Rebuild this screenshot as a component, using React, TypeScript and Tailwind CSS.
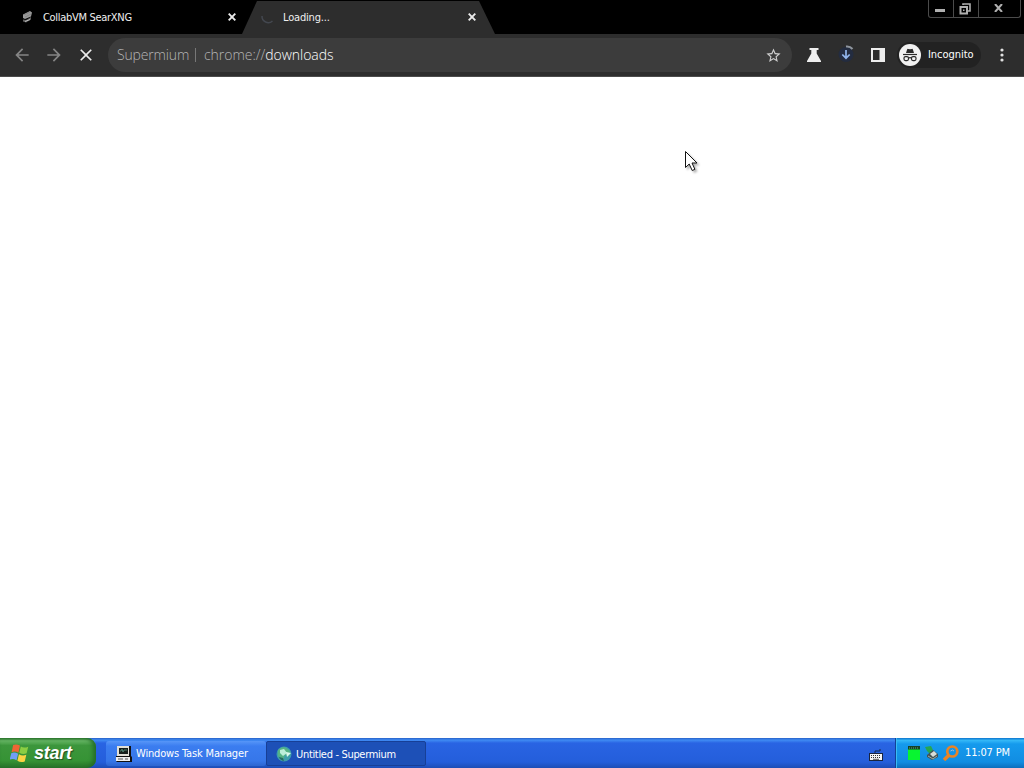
import React from 'react';
import { MdArrowBack, MdArrowForward, MdClose, MdStarBorder } from 'react-icons/md';

const uiFont = "font-['DejaVu_Sans_Condensed','DejaVu_Sans',sans-serif] [font-stretch:condensed]";

const TabClose = () => (
  <svg width="8" height="8" viewBox="0 0 8 8" className="shrink-0" stroke="#ececec" strokeWidth="1.9">
    <path d="M.7.7l6.6 6.6M7.3.7L.7 7.3" />
  </svg>
);

const SearxIcon = () => (
  <svg width="16" height="16" viewBox="0 0 16 16">
    <path d="M3 5.500L10 2l2 1.500-1 4-6 2.500-2-1z" fill="#999" />
    <path d="M4 6l6-3M5 8l6-3" stroke="#858585" />
    <path d="M3 10.500l3 .5 5-3v2.500l-5 3-3-1z" fill="#606060" />
    <path d="M5 12.500l5-2" stroke="#bbb" />
  </svg>
);

const Incognito = () => (
  <svg width="22" height="22" viewBox="0 0 22 22" className="shrink-0">
    <circle cx="11" cy="11" r="11" fill="#f1f1f1" />
    <path d="M7 9L8.100 5.500q.3-.8 1.100-.6l1.800.4 1.800-.4q.8-.2 1.100.6L15 9z" fill="#292929" />
    <path d="M4 10.500h14" stroke="#292929" strokeWidth="1.200" />
    <g fill="none" stroke="#292929" strokeWidth="1.200">
      <rect x="5" y="12.600" width="4.500" height="4" rx="1.500" />
      <rect x="12.500" y="12.600" width="4.500" height="4" rx="1.500" />
      <path d="M9.500 14q1.500-.8 3 0" />
    </g>
  </svg>
);

const DownloadIcon = () => (
  <svg width="18" height="20" viewBox="0 0 18 20" fill="none">
    <circle cx="9" cy="10.500" r="7.500" fill="#232c40" />
    <path d="M9 6v8M5.300 10.500L9 14.200l3.700-3.700" stroke="#91b5ec" strokeWidth="1.700" />
    <path d="M9 2.500q4-.5 6.500 2.500" stroke="#8f969f" strokeWidth="2" />
  </svg>
);

const WindowControls = () => (
  <div className="flex h-[18px] w-[93px] self-start rounded-b-[3px] border border-t-0 border-[#4b4b4b]">
    <div className="flex w-[25px] justify-center border-r border-[#4b4b4b]">
      <div className="mt-[9px] mr-[2px] h-[3px] w-[10px] bg-[#b0b0b0]" />
    </div>
    <div className="flex w-[25px] justify-center border-r border-[#4b4b4b]">
      <svg width="12" height="12" viewBox="0 0 12 12" className="mt-[3px] mr-[3px]" fill="none" stroke="#b0b0b0">
        <path d="M4 2V1h7v7H9" strokeWidth="1.600" />
        <rect x="1.500" y="4" width="6.500" height="6.500" strokeWidth="2" />
        <path d="M4 7.300h1.500" strokeWidth="1.500" />
      </svg>
    </div>
    <div className="flex flex-1 justify-center">
      <svg width="9" height="8" viewBox="0 0 9 8" className="mt-[4px] mr-[2px]" stroke="#b0b0b0" strokeWidth="2">
        <path d="M1 0l7 8M8 0L1 8" />
      </svg>
    </div>
  </div>
);

const TabStrip = () => (
  <div className="flex h-[34px] bg-black text-[11px] leading-[34px] text-[#efefef]">
    <div className="flex w-[242px] items-center pl-[20px]">
      <SearxIcon />
      <span className="ml-[7px] w-[185px] pt-px whitespace-nowrap tracking-[-0.3px]">CollabVM SearXNG</span>
      <TabClose />
    </div>
    <div className="flex w-[253px] items-center bg-[#2d2d2d] pl-[18px] [clip-path:polygon(15px_1px,237px_1px,253px_100%,0_100%)]">
      <svg width="16" height="16" viewBox="0 0 16 16" fill="none" stroke="#43474f" strokeWidth="1.500">
        <path d="M2 7a6.300 6.300 0 0 0 10.500 5" />
      </svg>
      <span className="ml-[7px] w-[185px] pt-px tracking-[-0.18px]">Loading...</span>
      <TabClose />
    </div>
    <div className="ml-auto flex pr-[3px]">
      <WindowControls />
    </div>
  </div>
);

const Toolbar = () => (
  <div className="flex h-[43px] items-center border-b border-[#4b4b4b] bg-[#2d2d2d]">
    <MdArrowBack size={20} className="ml-[12px] text-[#858585]" />
    <MdArrowForward size={20} className="ml-[12px] text-[#858585]" />
    <MdClose size={20} className="ml-[12px] text-[#ededed]" />
    <div className="ml-[12px] flex h-[34px] w-[684px] items-center rounded-full bg-[#3c3c3c] pl-[9px] font-['Open_Sans',sans-serif] text-[14px] font-light [font-stretch:normal] whitespace-nowrap text-[#b5b5b5]">
      <span className="mb-[2px] w-[71px] tracking-[-0.15px]">Supermium</span>
      <span className="mx-[7px] h-[14px] w-px bg-[#777]" />
      <span className="mb-[2px] ml-px tracking-[-0.03px]">chrome://<span className="text-white">downloads</span></span>
      <MdStarBorder size={17} className="mr-[10px] ml-auto text-[#cecece]" />
    </div>
    <svg width="16" height="16" viewBox="0 0 16 16" className="ml-[14px]" fill="#eee">
      <path d="M3.500 1h9v2h-1.800v3.500L15 14v1H1v-1l4.300-7.500V3H3.500z" />
    </svg>
    <div className="mb-[2px] ml-[15px] flex w-[18px]">
      <DownloadIcon />
    </div>
    <svg width="16" height="16" viewBox="0 0 16 16" className="ml-[15px]">
      <path fill="#ededed" fillRule="evenodd" d="M1 1h14v14H1zM3 3v10h6.500V3z" />
    </svg>
    <div className="ml-[11px] flex h-[26px] w-[84px] items-center rounded-full bg-[#222] pl-[2px]">
      <Incognito />
      <span className="ml-[7px] pt-px text-[11px] tracking-[-0.05px] text-white">Incognito</span>
    </div>
    <svg width="4" height="14" viewBox="0 0 4 14" className="ml-[19px]" fill="#e1e1e1">
      <circle cx="2" cy="2" r="1.600" />
      <circle cx="2" cy="7" r="1.600" />
      <circle cx="2" cy="12" r="1.600" />
    </svg>
  </div>
);

const WindowsFlag = () => (
  <svg width="20" height="19" viewBox="0 0 19 18" className="shrink-0">
    <path d="M3 1q3-1.500 6.500.5L8 8.300q-3-2-6.500-.5z" fill="#ef6534" />
    <path d="M10.300 2.300q3 2 7 .2l-1.500 6.300q-3.500 1.500-7-.5z" fill="#8bcd43" />
    <path d="M1.200 8.800q3-1.500 6.500.5l-1.500 6q-3.500-2-6.500-.5z" fill="#709ef5" />
    <path d="M8.500 9.800q3.500 2 7 .4L14 16.500q-3.500 1.500-7-.5z" fill="#fbd343" />
  </svg>
);

const ComputerIcon = () => (
  <svg width="16" height="16" viewBox="0 0 16 16" className="shrink-0">
    <path d="M1 0h14v10l1 1v5H1l-1-1v-5h1z" fill="#111" />
    <path d="M1 0h12v10H1z" fill="#e2e0d8" />
    <path d="M3 2h9v6H3z" fill="#171f1c" />
    <path d="M4 5h1l1-2 1 3 1-2h3" fill="none" stroke="#5b9481" strokeWidth=".8" />
    <path d="M0 11h14v4H0z" fill="#eee" />
    <path d="M2 13h5M9 13h3" stroke="#555" />
  </svg>
);

const GlobeIcon = () => (
  <svg width="16" height="16" viewBox="0 0 16 16" className="shrink-0">
    <circle cx="8" cy="8" r="7.500" fill="#3e9eab" />
    <path d="M2 4q4-4 8-2l4 3-1 5-4-1-2 5-5-4z" fill="#56b385" />
    <path d="M4 4l4-1 3 4-4 3-3-3z" fill="#bcefd9" />
    <path d="M10 6l5 1-4 4z" fill="#dcf8ed" />
    <path d="M3 11l4 1 1 3q-4-1-5-4z" fill="#286c62" />
  </svg>
);

const TrayIcons = () => (
  <>
    <svg width="12" height="14" viewBox="0 0 12 14" className="shrink-0">
      <path d="M0 0h12v14H0z" fill="#08f530" />
      <path d="M0 0h12v3.500H0z" fill="#164325" />
      <path d="M1 2h10" stroke="#65a67c" strokeDasharray="1 1" />
    </svg>
    <svg width="14" height="14" viewBox="0 0 14 14" className="ml-[5px] shrink-0">
      <path d="M0 1l6-1 2 4-3 4-3-3z" fill="#27a650" />
      <path d="M2 9l6-5 5 4v3l-6 3-5-3z" fill="#465252" />
      <path d="M5 8l4-3 3 3-4 3z" fill="#d8ded9" />
      <path d="M3 10l5 3 4-3" fill="none" stroke="#9aaca6" />
    </svg>
    <svg width="16" height="16" viewBox="0 0 16 16" className="ml-[4px] shrink-0" fill="none" stroke="#e98425">
      <circle cx="9.300" cy="6.500" r="5" strokeWidth="2.700" />
      <path d="M6 10l-5 5" strokeWidth="3.500" />
      <path d="M7.500 6q2-2 3.500 0" stroke="#a8bfd0" strokeWidth="1" />
    </svg>
  </>
);

const Taskbar = () => (
  <div className="flex h-[30px] bg-[linear-gradient(#2861c8_0,#3f8bf3_7%,#2964e3_17%,#245edb_80%,#1d4db5_100%)] text-[11px] text-white">
    <div className="flex w-[96px] items-center rounded-r-[9px] bg-[linear-gradient(#317b31_0,#67b765_9%,#3c963c_25%,#369335_75%,#287329_100%)] pl-[10px] shadow-[inset_-3px_0_4px_#246d28]">
      <WindowsFlag />
      <span className="ml-[4px] font-['Liberation_Sans',sans-serif] text-[18px] leading-[20px] font-bold tracking-[-0.25px] italic [text-shadow:1px_1px_1px_#234e22]">start</span>
    </div>
    <div className="mt-[3px] ml-[10px] flex h-[25px] w-[160px] items-center rounded-[3px] bg-[linear-gradient(#5796f8,#3b7df0_20%,#3676e9_80%,#2d65d0)] pl-[10px]">
      <ComputerIcon />
      <span className="ml-[4px] pt-px tracking-[-0.16px] whitespace-nowrap">Windows Task Manager</span>
    </div>
    <div className="mt-[3px] flex h-[25px] w-[160px] items-center rounded-[2px] border border-[#173f96] bg-[#1d50b7] pl-[9px]">
      <GlobeIcon />
      <span className="mt-[2px] ml-[4px] pt-px tracking-[-0.32px] whitespace-nowrap">Untitled - Supermium</span>
    </div>
    <svg width="14" height="12" viewBox="0 0 14 12" className="mt-[11px] mr-[12px] ml-auto">
      <path d="M6 4V2h5V0" fill="none" stroke="#152a4f" />
      <path d="M0 4h14v8H0z" fill="#18243d" />
      <path d="M1 5h12v6H1z" fill="#f4f4f4" />
      <path d="M2 6.500h10M2 8.500h10" stroke="#333" strokeDasharray="1 1" />
      <path d="M4 10.300h6" stroke="#555" />
    </svg>
    <div className="flex w-[129px] items-center border-l border-[#124296] bg-[linear-gradient(#0d73cd_0,#33b7f7_8%,#159aed_20%,#118de2_80%,#0c6ebc_100%)] pl-[12px] shadow-[inset_1px_0_0_#3abcf4]">
      <TrayIcons />
      <span className="ml-[6px] pt-px tracking-[-0.15px] whitespace-nowrap">11:07 PM</span>
    </div>
  </div>
);

// Floats above the page, drop shadow included
const Cursor = () => (
  <svg width="18" height="26" viewBox="0 0 18 26" className="absolute top-[150px] left-[684px] drop-shadow-[2px_2px_1px_rgba(0,0,0,0.3)]">
    <path d="M1.500 1.500v16l3.700-3.500 3 6.500 2.700-1.200-2.900-6.300h5z" fill="#fff" stroke="#111" />
  </svg>
);

export default function App() {
  return (
    <div className={`relative flex h-screen w-full flex-col overflow-hidden bg-white ${uiFont}`}>
      <TabStrip />
      <Toolbar />
      <main className="flex-1 bg-white" />
      <Taskbar />
      <Cursor />
    </div>
  );
}
